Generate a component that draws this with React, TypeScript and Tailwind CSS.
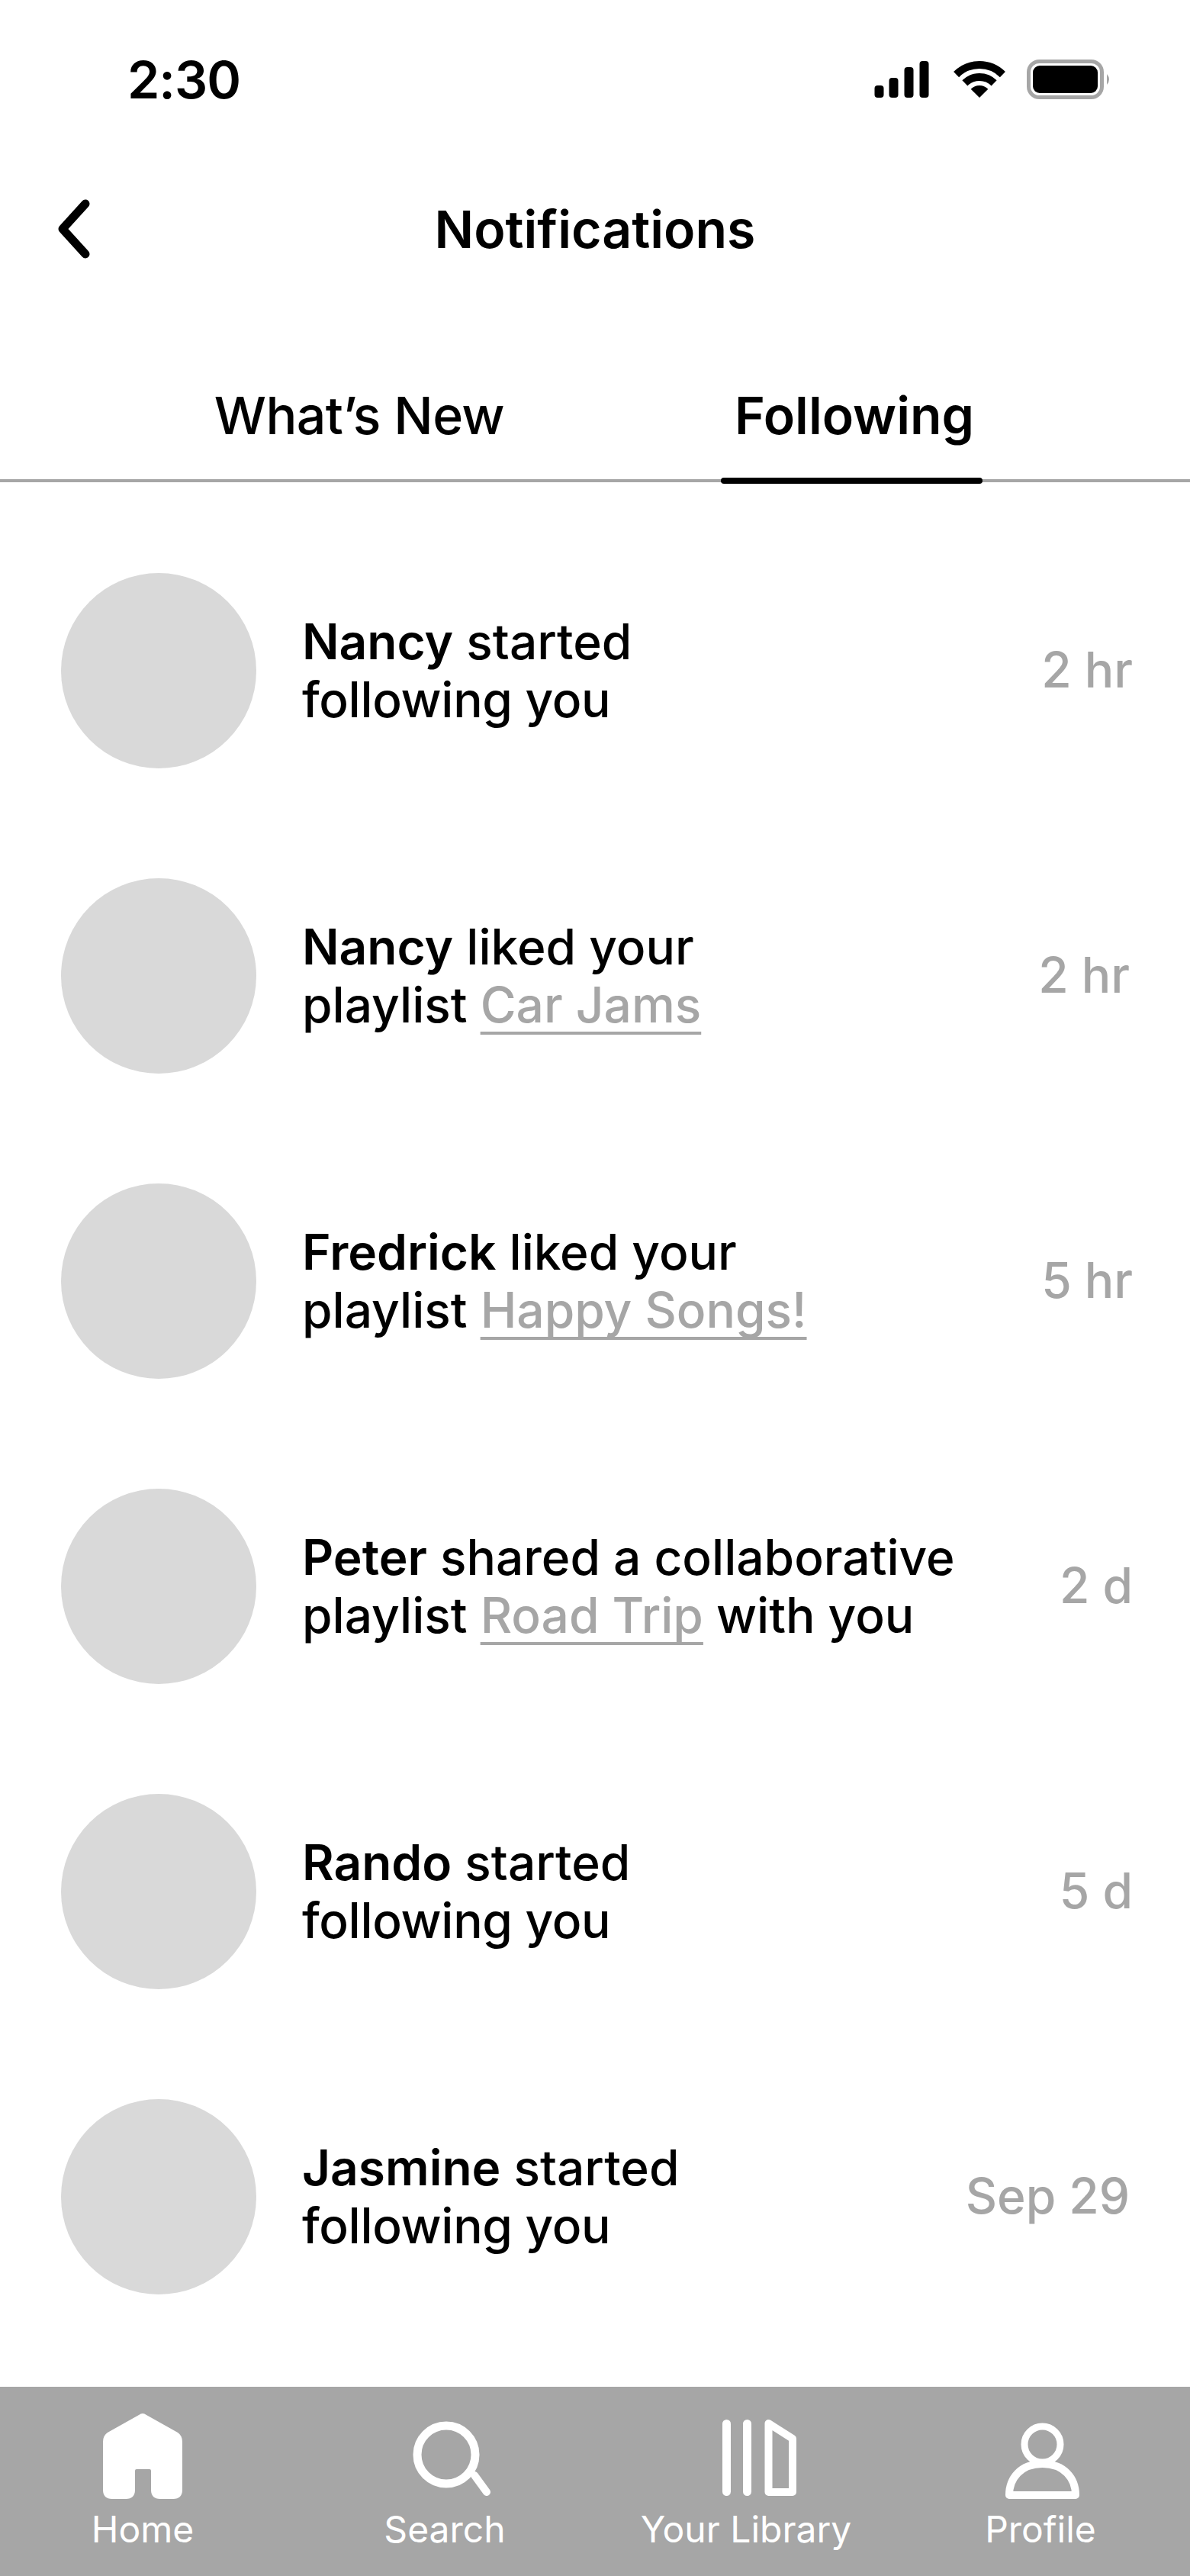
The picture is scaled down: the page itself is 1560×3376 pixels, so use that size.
import React from "react";

const font = "font-['Inter',sans-serif]";

function Link({ children }: { children: React.ReactNode }) {
  return (
    <span className="text-[#a6a6a6] underline decoration-[4px] underline-offset-[12px] [text-decoration-skip-ink:none]">
      {children}
    </span>
  );
}

type Row = { line1: React.ReactNode; line2: React.ReactNode; time: string; pr: string };

const following = <span className="tracking-[-0.3px]">following you</span>;

const rows: Row[] = [
  { line1: <><b className="font-semibold">Nancy</b> started</>, line2: following, time: "2 hr", pr: "pr-[75px]" },
  { line1: <><b className="font-semibold">Nancy</b> liked your</>, line2: <>playlist <Link>Car Jams</Link></>, time: "2 hr", pr: "pr-[79px]" },
  { line1: <><b className="font-semibold">Fredrick</b> liked your</>, line2: <>playlist <Link>Happy Songs!</Link></>, time: "5 hr", pr: "pr-[75px]" },
  { line1: <><b className="font-semibold">Peter</b> shared a collaborative</>, line2: <>playlist <Link>Road Trip</Link> with you</>, time: "2 d", pr: "pr-[75px]" },
  { line1: <><b className="font-semibold">Rando</b> started</>, line2: following, time: "5 d", pr: "pr-[75px]" },
  { line1: <><b className="font-semibold">Jasmine</b> started</>, line2: following, time: "Sep 29", pr: "pr-[79px]" },
];

function NavItem({ label, width, viewBox, children }: { label: string; width: string; viewBox: string; children: React.ReactNode }) {
  return (
    <div className={`${width} flex flex-col items-center`}>
      <svg width="140" height="120" viewBox={viewBox} className="block shrink-0">{children}</svg>
      <span className="text-[48px] leading-[58px] pt-[6px] text-white whitespace-nowrap">{label}</span>
    </div>
  );
}

export default function App() {
  return (
    <div className={`${font} w-[1560px] h-[3376px] bg-white text-black flex flex-col overflow-hidden`}>
      {/* status bar */}
      <div className="h-[208px] shrink-0 flex items-center justify-between pl-[167px] pr-[103px]">
        <span className="text-[68px] leading-none font-semibold tracking-[-1px]">2:30</span>
        <div className="flex items-center gap-[28px]">
          <svg width="72" height="48" viewBox="0 0 71 48" className="mr-[4px]">
            <rect x="0" y="32" width="12" height="16" rx="4" fill="#000" />
            <rect x="19" y="22" width="12" height="26" rx="4" fill="#000" />
            <rect x="39" y="8" width="12" height="40" rx="4" fill="#000" />
            <rect x="59" y="0" width="12" height="48" rx="4" fill="#000" />
          </svg>
          <svg width="68" height="48" viewBox="0 0 68 48">
            <path d="M34 48 L22.7 36.7 A16 16 0 0 1 45.3 36.7 Z" fill="#000" />
            <path d="M14.9 28.9 A27 27 0 0 1 53.1 28.9" fill="none" stroke="#000" strokeWidth="10" />
            <path d="M3.6 17.6 A43 43 0 0 1 64.4 17.6" fill="none" stroke="#000" strokeWidth="10" />
          </svg>
          <svg width="111" height="52" viewBox="0 0 111 52">
            <rect x="2.500" y="2.500" width="96" height="47" rx="14" fill="none" stroke="#a6a6a6" strokeWidth="5" />
            <rect x="8" y="8" width="85" height="36" rx="9" fill="#000" />
            <path d="M105 19 Q111 26 105 33 Z" fill="#a6a6a6" />
          </svg>
        </div>
      </div>

      {/* title */}
      <div className="relative h-[192px] shrink-0 flex items-center justify-center">
        <svg width="44" height="78" viewBox="0 0 44 78" className="absolute left-[75px] top-[53px]">
          <path d="M37 6 L7 39 L37 72" fill="none" stroke="#000" strokeWidth="11" strokeLinecap="round" strokeLinejoin="round" />
        </svg>
        <h1 className="text-[68px] leading-none font-semibold pb-[8px]">Notifications</h1>
      </div>

      {/* tabs */}
      <div className="h-[232px] shrink-0 border-b-[4px] border-[#a6a6a6] flex items-center">
        <div className="w-[940px] shrink-0 pt-[60px] pl-[2px] text-center text-[68px] leading-none font-medium tracking-[-0.6px]">What’s New</div>
        <div className="w-[360px] shrink-0 pt-[60px] text-center text-[68px] leading-none font-semibold">Following</div>
      </div>
      <div className="relative h-0 shrink-0">
        <div className="absolute left-[945px] top-[-6px] w-[343px] h-[8px] rounded-full bg-black" />
      </div>

      {/* list */}
      <div className="flex flex-col gap-[144px] pt-[119px] pl-[80px] font-medium">
        {rows.map((r, i) => (
          <div key={i} className={`h-[256px] flex items-center justify-between ${r.pr}`}>
            <div className="flex items-center gap-[60px]">
              <div className="w-[256px] h-[256px] shrink-0 rounded-full bg-[#d9d9d9]" />
              <div className="text-[64px] leading-[76px] whitespace-nowrap">
                <div>{r.line1}</div>
                <div>{r.line2}</div>
              </div>
            </div>
            <span className="text-[64px] leading-[76px] pb-[2px] text-[#a6a6a6] whitespace-nowrap">{r.time}</span>
          </div>
        ))}
      </div>

      {/* bottom nav */}
      <div className="mt-auto h-[248px] shrink-0 bg-[#a6a6a6] flex pt-[32px]">
        <NavItem label="Home" width="w-[374px]" viewBox="118 3160 140 120">
          <path d="M183 3165 Q188 3161 193 3165 L234 3188 Q240 3192 240 3200 L240 3263 Q240 3275 228 3275 L211 3275 Q199 3275 199 3263 L199 3238 Q199 3236 197 3236 L180 3236 Q178 3236 178 3238 L178 3263 Q178 3275 166 3275 L148 3275 Q136 3275 136 3263 L136 3200 Q136 3192 142 3188 Z" fill="#fff" />
        </NavItem>
        <NavItem label="Search" width="w-[418px]" viewBox="513 3160 140 120">
          <circle cx="585" cy="3217" r="38" fill="none" stroke="#fff" strokeWidth="11" />
          <path d="M622 3244 L638 3266" fill="none" stroke="#fff" strokeWidth="10" strokeLinecap="round" />
        </NavItem>
        <NavItem label="Your Library" width="w-[372px]" viewBox="908 3160 140 120">
          <rect x="947" y="3171" width="11" height="100" rx="5.500" fill="#fff" />
          <rect x="974" y="3171" width="11" height="100" rx="5.500" fill="#fff" />
          <path d="M1007.500 3176 L1039 3196 L1039 3266 L1007.500 3266 Z" fill="none" stroke="#fff" strokeWidth="10" strokeLinejoin="round" />
        </NavItem>
        <NavItem label="Profile" width="w-[396px] pl-[4px]" viewBox="1296 3160 140 120">
          <circle cx="1368.500" cy="3203.500" r="23.500" fill="none" stroke="#fff" strokeWidth="9" />
          <path d="M1325 3270 C1325 3248 1340 3229 1368.500 3229 C1397 3229 1412 3248 1412 3270 Z" fill="none" stroke="#fff" strokeWidth="10" strokeLinejoin="round" />
        </NavItem>
      </div>
    </div>
  );
}
